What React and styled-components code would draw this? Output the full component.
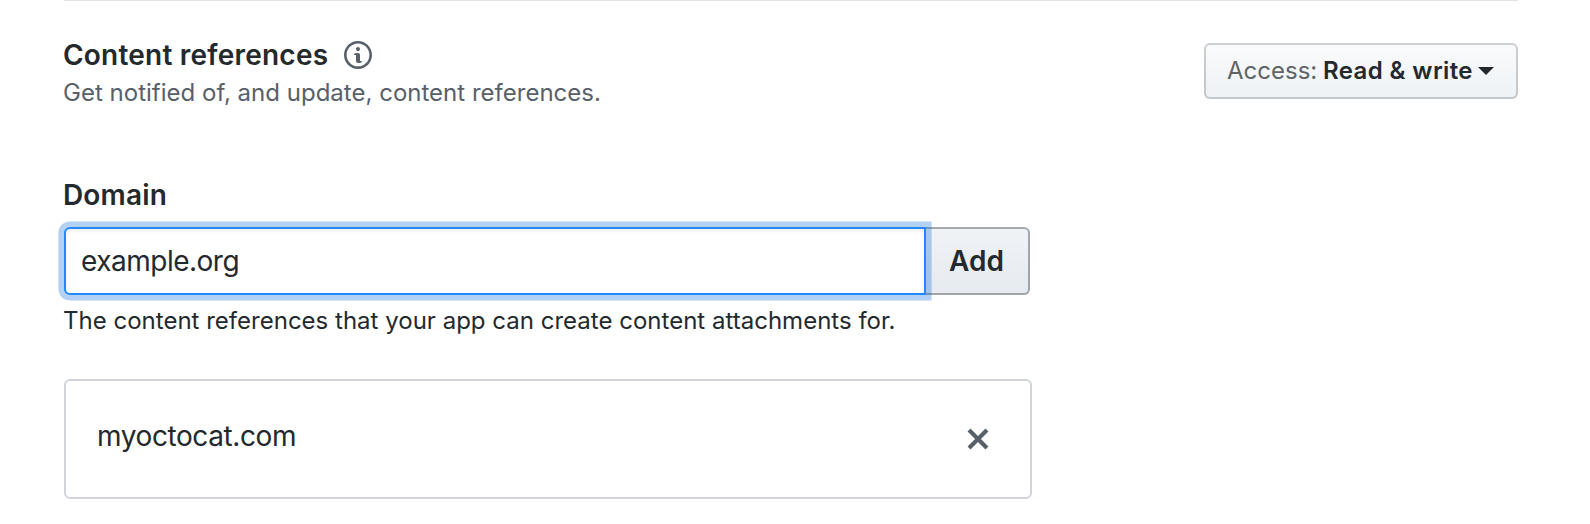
import React, { useState } from "react";
import styled, { createGlobalStyle } from "styled-components";

const GlobalStyle = createGlobalStyle`
  *, *::before, *::after { box-sizing: border-box; }
  body {
    margin: 0;
    background: #fff;
    color: #24292e;
    font-family: Inter, "Liberation Sans", sans-serif;
  }
  button, input { font-family: inherit; color: inherit; margin: 0; }
`;

const Section = styled.section`
  width: 1454px;
  height: 524px;
  margin-left: 64px;
  border-top: 1px solid #e1e4e8;
`;

const Header = styled.header`
  display: flex;
  justify-content: space-between;
  align-items: flex-start;
  height: 172px;
  padding-top: 36px;
`;

const Title = styled.h2`
  display: flex;
  align-items: center;
  gap: 16px;
  height: 36px;
  margin: 0 0 0 -1px;
  font-size: 28px;
  font-weight: 600;
  line-height: 36px;
  letter-spacing: 0.22px;
  white-space: nowrap;
`;

const Description = styled.p`
  margin: 2px 0 0 -1px;
  color: #586069;
  font-size: 24px;
  line-height: 36px;
  letter-spacing: 0.01px;
  white-space: nowrap;
`;

const Icon = styled.svg`
  display: block;
  flex: none;
  fill: #586069;
`;

const AccessButton = styled.button`
  display: flex;
  align-items: center;
  width: 314px;
  height: 56px;
  margin-top: 6px;
  padding: 0 0 0 21px;
  border: 2px solid rgba(27, 31, 35, 0.2);
  border-radius: 6px;
  background: #eff3f6 linear-gradient(-180deg, #fafbfc 0%, #eff3f6 90%) border-box;
  font-size: 24px;
  line-height: 40px;
  text-align: left;
  white-space: nowrap;
`;

const AccessLabel = styled.span`
  width: 96px;
  color: #5f6467;
`;

const AccessValue = styled.span`
  width: 150px;
  font-weight: 600;
  letter-spacing: 0.4px;
`;

const Caret = styled.span`
  margin-left: 5px;
  border: 8px solid transparent;
  border-top-color: #24292e;
  border-bottom: 0;
`;

const Label = styled.label`
  display: block;
  width: max-content;
  height: 36px;
  margin-left: -1px;
  font-size: 28px;
  font-weight: 600;
  line-height: 44px;
  letter-spacing: 0.15px;
`;

const InputGroup = styled.div`
  display: flex;
  width: 966px;
  height: 68px;
  margin-top: 18px;
`;

const DomainInput = styled.input`
  position: relative;
  z-index: 1;
  flex: 1;
  min-width: 0;
  padding: 0 15px;
  border: 2px solid #2188ff;
  border-radius: 6px 0 0 6px;
  outline: 0;
  background: #fff;
  box-shadow: inset 0 2px 4px rgba(27, 31, 35, 0.075), 0 0 0 0.2em rgba(3, 102, 214, 0.3);
  font-size: 28px;
  letter-spacing: -0.5px;
`;

const AddButton = styled.button`
  width: 106px;
  margin-left: -2px;
  padding: 0 1px 0 0;
  border: 2px solid rgba(27, 31, 35, 0.35);
  border-radius: 0 6px 6px 0;
  background: #e6ebf1 linear-gradient(-180deg, #f0f3f6 0%, #e6ebf1 90%) border-box;
  font-size: 28px;
  font-weight: 600;
`;

const Hint = styled.p`
  margin: 8px 0 0 -1px;
  font-size: 24px;
  line-height: 36px;
  letter-spacing: 0.01px;
  white-space: nowrap;
`;

const DomainRow = styled.div`
  display: flex;
  justify-content: space-between;
  align-items: center;
  width: 968px;
  height: 120px;
  margin-top: 40px;
  padding: 0 40px 0 31px;
  border: 2px solid #d1d5da;
  border-radius: 6px;
  font-size: 28px;
`;

const DomainName = styled.span`
  margin-bottom: 7px;
  letter-spacing: -0.4px;
`;

const RemoveButton = styled.button`
  display: flex;
  padding: 0;
  border: 0;
  background: none;
`;

const InfoIcon = () => (
  <Icon width="28" height="32" viewBox="0 0 14 16" aria-hidden="true">
    <path
      fillRule="evenodd"
      d="M6.3 5.69a.942.942 0 01-.28-.7c0-.28.09-.52.28-.7.19-.18.42-.28.7-.28.28 0 .52.09.7.28.18.19.28.42.28.7 0 .28-.09.52-.28.7a1 1 0 01-.7.3c-.28 0-.52-.11-.7-.3zM8 7.99c-.02-.25-.11-.48-.31-.69-.2-.19-.42-.3-.69-.31H6c-.27.02-.48.13-.69.31-.2.2-.3.44-.31.69h1v3c.02.27.11.5.31.69.2.2.42.31.69.31h1c.27 0 .48-.11.69-.31.2-.19.3-.42.31-.69H8V7.98v.01zM7 2.3c-3.14 0-5.7 2.54-5.7 5.68 0 3.14 2.56 5.7 5.7 5.7s5.7-2.55 5.7-5.7c0-3.15-2.56-5.69-5.7-5.69v.01zM7 .98c3.86 0 7 3.14 7 7s-3.14 7-7 7-7-3.12-7-7 3.14-7 7-7z"
    />
  </Icon>
);

const CloseIcon = () => (
  <Icon width="24" height="32" viewBox="0 0 12 16" aria-hidden="true">
    <path
      fillRule="evenodd"
      d="M7.48 8l3.75 3.75-1.48 1.48L6 9.48l-3.75 3.75-1.48-1.48L4.52 8 .77 4.25l1.48-1.48L6 6.52l3.75-3.75 1.48 1.48L7.48 8z"
    />
  </Icon>
);

export default function App() {
  const [domain, setDomain] = useState("example.org");
  return (
    <>
      <GlobalStyle />
      <Section>
        <Header>
          <div>
            <Title>
              <span>Content references</span>
              <InfoIcon />
            </Title>
            <Description>Get notified of, and update, content references.</Description>
          </div>
          <AccessButton type="button">
            <AccessLabel>Access:</AccessLabel>
            <AccessValue>Read &amp; write</AccessValue>
            <Caret />
          </AccessButton>
        </Header>
        <Label htmlFor="domain">Domain</Label>
        <InputGroup>
          <DomainInput id="domain" value={domain} onChange={(e) => setDomain(e.target.value)} />
          <AddButton type="button">Add</AddButton>
        </InputGroup>
        <Hint>The content references that your app can create content attachments for.</Hint>
        <DomainRow>
          <DomainName>myoctocat.com</DomainName>
          <RemoveButton type="button" aria-label="Remove myoctocat.com">
            <CloseIcon />
          </RemoveButton>
        </DomainRow>
      </Section>
    </>
  );
}
